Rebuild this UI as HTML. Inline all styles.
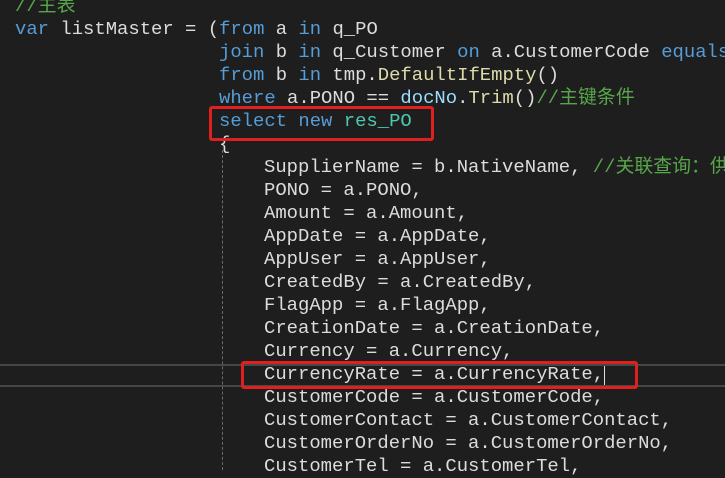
<!DOCTYPE html>
<html><head><meta charset="utf-8"><style>
html,body{margin:0;padding:0}
body{width:725px;height:469px;background:#1e1e1e;position:relative;overflow:hidden;font-family:"Liberation Mono","Noto Sans CJK SC",monospace;font-size:18.9px;color:#dcdcdc}
.l{position:absolute;white-space:pre;line-height:23px;height:23px}
.k{color:#569cd6}.t{color:#4ec9b0}.c{color:#57a64a}.m{color:#dcdcaa}.v{color:#9cdcfe}
.box{position:absolute;border:3px solid #e0201e;border-radius:3px;box-sizing:border-box}
</style></head><body>
<div style="position:absolute;left:0;right:0;top:364px;height:23px;border-top:2px solid #464646;border-bottom:2px solid #464646;box-sizing:border-box"></div>
<div style="position:absolute;left:222px;top:150px;height:320px;border-left:1px dashed #6a6a6a"></div>
<div class="l c" style="left:15px;top:-5px">//主表</div>
<div class="l" style="left:15px;top:18px"><span class="k">var</span> listMaster = (<span class="k">from</span> a <span class="k">in</span> q_PO</div>
<div class="l" style="left:219px;top:41px"><span class="k">join</span> b <span class="k">in</span> q_Customer <span class="k">on</span> a.CustomerCode <span class="k">equals</span></div>
<div class="l" style="left:219px;top:64px"><span class="k">from</span> b <span class="k">in</span> tmp.<span class="m">DefaultIfEmpty</span>()</div>
<div class="l" style="left:219px;top:87px"><span class="k">where</span> a.PONO == <span class="v">docNo</span>.<span class="m">Trim</span>()<span class="c">//主键条件</span></div>
<div class="l" style="left:219px;top:110px"><span class="k">select</span> <span class="k">new</span> <span class="t">res_PO</span></div>
<div class="l" style="left:219px;top:133px">{</div>
<div class="l" style="left:264px;top:156px">SupplierName = b.NativeName, <span class="c">//关联查询：供</span></div>
<div class="l" style="left:264px;top:179px">PONO = a.PONO,</div>
<div class="l" style="left:264px;top:202px">Amount = a.Amount,</div>
<div class="l" style="left:264px;top:225px">AppDate = a.AppDate,</div>
<div class="l" style="left:264px;top:248px">AppUser = a.AppUser,</div>
<div class="l" style="left:264px;top:271px">CreatedBy = a.CreatedBy,</div>
<div class="l" style="left:264px;top:294px">FlagApp = a.FlagApp,</div>
<div class="l" style="left:264px;top:317px">CreationDate = a.CreationDate,</div>
<div class="l" style="left:264px;top:340px">Currency = a.Currency,</div>
<div class="l" style="left:264px;top:363px">CurrencyRate = a.CurrencyRate,</div>
<div style="position:absolute;left:604px;top:366px;width:1px;height:19px;background:#dcdcdc"></div>
<div class="l" style="left:264px;top:386px">CustomerCode = a.CustomerCode,</div>
<div class="l" style="left:264px;top:409px">CustomerContact = a.CustomerContact,</div>
<div class="l" style="left:264px;top:432px">CustomerOrderNo = a.CustomerOrderNo,</div>
<div class="l" style="left:264px;top:455px">CustomerTel = a.CustomerTel,</div>
<div class="box" style="left:209px;top:106px;width:225px;height:35px"></div>
<div class="box" style="left:241px;top:361px;width:397px;height:28px"></div>
</body></html>
